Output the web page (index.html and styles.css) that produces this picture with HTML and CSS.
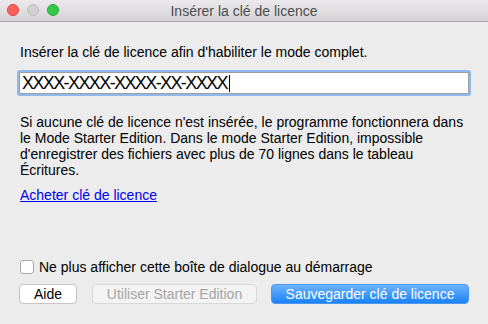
FILE: index.html
```html
<!DOCTYPE html>
<html lang="fr">
<head>
<meta charset="utf-8">
<title>Insérer la clé de licence</title>
<link rel="stylesheet" href="styles.css">
</head>
<body>
<div class="window">
  <div class="titlebar">
    <div class="lights">
      <span class="light red"></span>
      <span class="light gray"></span>
      <span class="light green"></span>
    </div>
    <div class="title">Insérer la clé de licence</div>
  </div>
  <div class="content">
    <p class="intro">Insérer la clé de licence afin d'habiliter le mode complet.</p>
    <div class="field"><span class="value">XXXX-XXXX-XXXX-XX-XXXX</span><span class="caret"></span></div>
    <p class="info">Si aucune clé de licence n'est insérée, le programme fonctionnera dans le Mode Starter Edition. Dans le mode Starter Edition, impossible d'enregistrer des fichiers avec plus de 70 lignes dans le tableau Écritures.</p>
    <a class="link" href="#">Acheter clé de licence</a>
    <div class="spacer"></div>
    <label class="check"><span class="box"></span>Ne plus afficher cette boîte de dialogue au démarrage</label>
    <div class="buttons">
      <button class="btn help">Aide</button>
      <button class="btn disabled">Utiliser Starter Edition</button>
      <button class="btn primary">Sauvegarder clé de licence</button>
    </div>
  </div>
</div>
</body>
</html>
```
FILE: styles.css
```css
html, body {
  margin: 0;
  padding: 0;
}
body {
  width: 488px;
  height: 324px;
  overflow: hidden;
  font-family: "Liberation Sans", Arial, sans-serif;
  font-size: 14px;
  color: #000;
  background: #ececec;
}
.window {
  width: 488px;
  height: 324px;
  display: flex;
  flex-direction: column;
  background: #ececec;
}
.titlebar {
  height: 21px;
  border-bottom: 1px solid #a9a7a9;
  background: linear-gradient(#ebe9eb, #d5d3d5);
  display: flex;
  align-items: center;
  position: relative;
  flex: none;
}
.lights {
  display: flex;
  gap: 8px;
  padding-left: 7px;
  position: absolute;
  left: 0;
  top: 4px;
}
.light {
  width: 12px;
  height: 12px;
  border-radius: 50%;
  box-sizing: border-box;
}
.red { background: #fc605c; border: 1px solid #e0443e; }
.gray { background: #d0d0d0; border: 1px solid #bcbcbc; }
.green { background: #34c84a; border: 1px solid #25a93a; }
.title {
  flex: 1;
  text-align: center;
  color: #4d4d4d;
  font-size: 14px;
  padding-top: 1px;
}
.content {
  flex: 1;
  display: flex;
  flex-direction: column;
  padding: 0 14px 0 20px;
}
.intro {
  margin: 22px 0 0 0;
  line-height: 16px;
}
.field {
  margin: 12px 0 0 -1px;
  width: 450px;
  height: 22px;
  box-sizing: border-box;
  background: #fff;
  border: 1px solid #9e9e9e;
  box-shadow: 0 0 0 2px #8fb8ee;
  border-radius: 1px;
  display: flex;
  align-items: center;
  padding-left: 2px;
}
.value {
  font-size: 18px;
  letter-spacing: -1.6px;
  line-height: 20px;
}
.caret {
  width: 1px;
  height: 17px;
  background: #000;
  margin-left: 2px;
}
.info {
  margin: 20px 0 0 0;
  line-height: 16px;
}
.link {
  margin-top: 9px;
  color: #0000ee;
  text-decoration: underline;
  line-height: 16px;
  align-self: flex-start;
}
.spacer { flex: 1; }
.check {
  display: flex;
  align-items: center;
  gap: 5px;
  line-height: 16px;
}
.box {
  width: 14px;
  height: 14px;
  box-sizing: border-box;
  border: 1px solid #a8a8a8;
  border-radius: 3px;
  background: #fff;
}
.buttons {
  display: flex;
  gap: 15px;
  margin: 9px 0 20px -1px;
}
.btn {
  height: 20px;
  box-sizing: border-box;
  font-family: "Liberation Sans", Arial, sans-serif;
  font-size: 14px;
  padding: 0;
  border-radius: 4px;
  border: 1px solid #c5c5c5;
  background: #fff;
  color: #000;
  line-height: 18px;
}
.help { width: 58px; }
.disabled {
  width: 165px;
  background: #f3f3f3;
  color: #a5a5a5;
  border-color: #d8d8d8;
}
.primary {
  width: 198px;
  margin-left: -1px;
  background: linear-gradient(#6cb3fa, #1a82fb);
  border-color: #4a97f0;
  color: #fff;
}
```
